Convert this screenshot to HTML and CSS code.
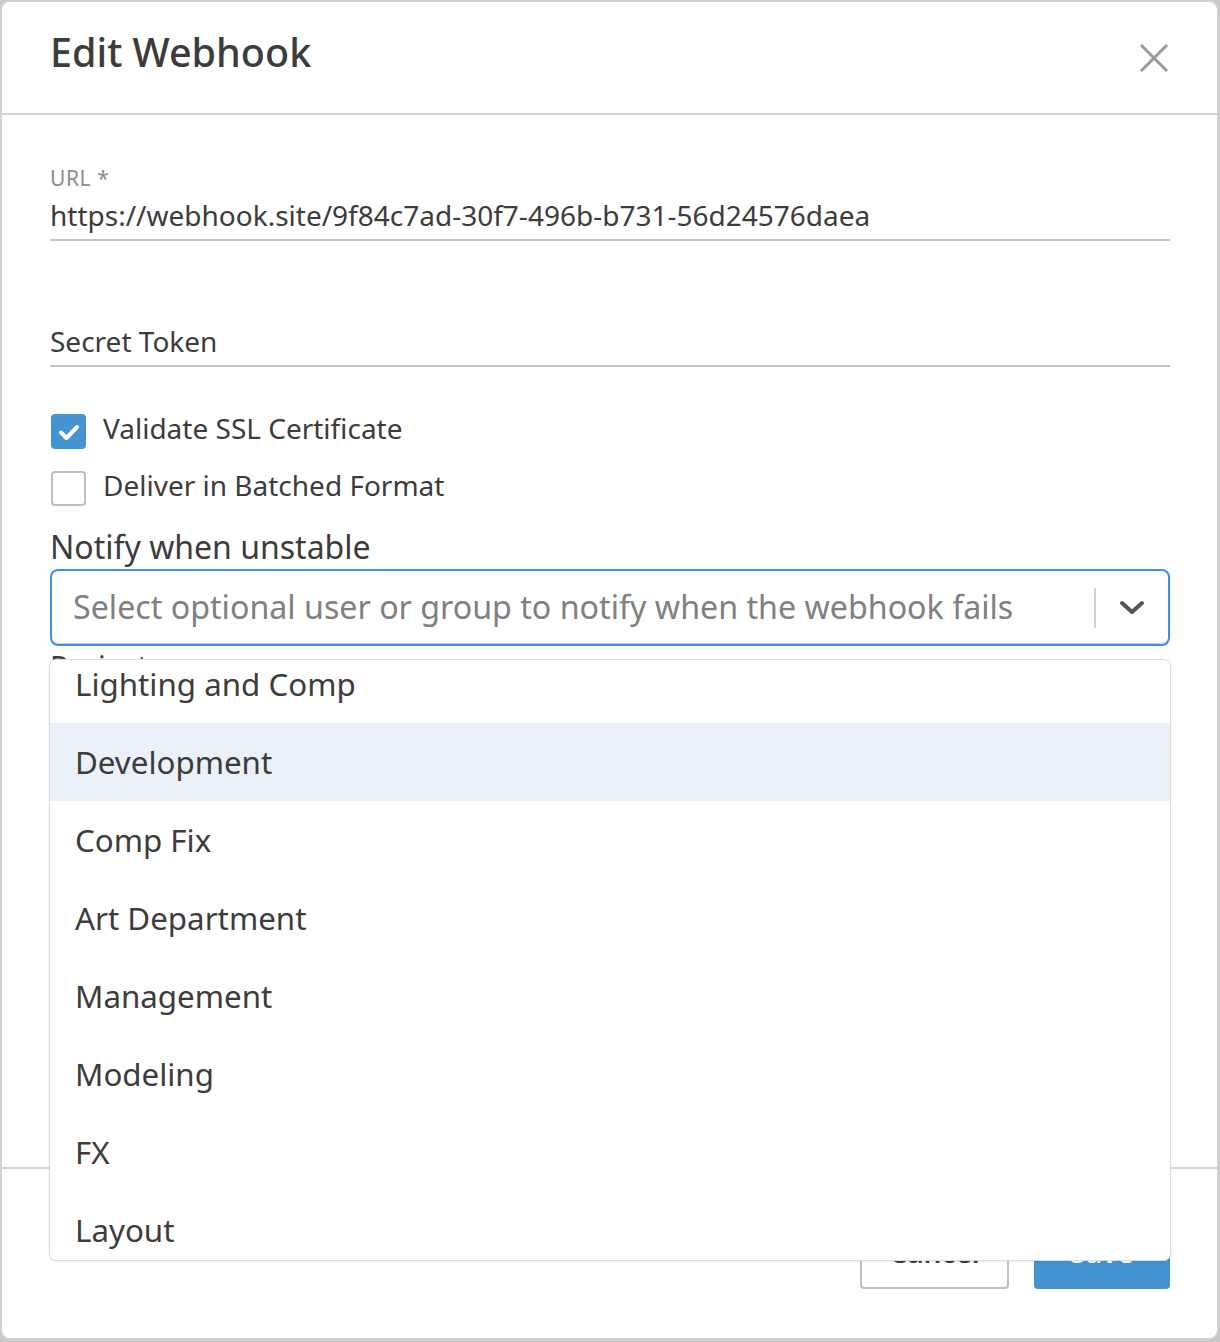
FILE: index.html
```html
<!DOCTYPE html>
<html lang="en">
<head>
<meta charset="utf-8">
<title>Edit Webhook</title>
<link rel="stylesheet" href="styles.css">
</head>
<body>
<div class="modal">
  <header class="modal-header">
    <h1 class="title">Edit Webhook</h1>
    <button class="close" type="button" aria-label="Close">
      <svg width="28" height="28" viewBox="0 0 28 28"><path d="M2 2 L26 26 M26 2 L2 26" stroke="#9a9a9a" stroke-width="3" stroke-linecap="square" fill="none"/></svg>
    </button>
  </header>
  <div class="modal-body">
    <div class="field">
      <div class="field-label">URL *</div>
      <div class="field-input">https://webhook.site/9f84c7ad-30f7-496b-b731-56d24576daea</div>
    </div>
    <div class="field">
      <div class="field-label"></div>
      <div class="field-input">Secret Token</div>
    </div>
    <div class="checks">
      <label class="check">
        <span class="box checked">
          <svg width="22" height="18" viewBox="0 0 22 18"><path d="M3 9.5 L8.5 15 L19 4" stroke="#fff" stroke-width="4" fill="none" stroke-linecap="round" stroke-linejoin="round"/></svg>
        </span>
        <span class="check-text">Validate SSL Certificate</span>
      </label>
      <label class="check">
        <span class="box"></span>
        <span class="check-text">Deliver in Batched Format</span>
      </label>
    </div>
    <div class="select-field">
      <div class="select-label">Notify when unstable</div>
      <div class="select">
        <span class="placeholder">Select optional user or group to notify when the webhook fails</span>
        <span class="sep"></span>
        <span class="chevron">
          <svg width="26" height="16" viewBox="0 0 26 16"><path d="M3 3 L13 12 L23 3" stroke="#555" stroke-width="4" fill="none" stroke-linecap="round" stroke-linejoin="round"/></svg>
        </span>
      </div>
      <div class="next-label">Project</div>
      <div class="menu">
        <ul class="menu-list">
          <li class="item">Lighting and Comp</li>
          <li class="item active">Development</li>
          <li class="item">Comp Fix</li>
          <li class="item">Art Department</li>
          <li class="item">Management</li>
          <li class="item">Modeling</li>
          <li class="item">FX</li>
          <li class="item">Layout</li>
        </ul>
      </div>
    </div>
  </div>
  <footer class="modal-footer">
    <button class="btn btn-cancel" type="button">Cancel</button>
    <button class="btn btn-save" type="button">Save</button>
  </footer>
</div>
</body>
</html>
```
FILE: styles.css
```css
* { box-sizing: border-box; }
html, body { margin: 0; padding: 0; }
body {
  width: 1220px;
  height: 1342px;
  background: #c9c9c9;
  font-family: "Noto Sans", "Open Sans", sans-serif;
  color: #3c3c3c;
  overflow: hidden;
}
.modal {
  width: 1219px;
  height: 1340px;
  background: #fff;
  border: 2px solid #d2d2d2;
  border-radius: 10px;
  display: flex;
  flex-direction: column;
  overflow: hidden;
}
.modal-header {
  height: 113px;
  flex: none;
  border-bottom: 2px solid #d2d2d2;
  display: flex;
  align-items: center;
  justify-content: space-between;
  padding: 0 49px 0 48px;
}
.title {
  margin: 0;
  font-size: 39.5px;
  font-weight: 500;
  line-height: 1;
  color: #3c3c3c;
  padding-bottom: 9px;
}
.close {
  border: 0;
  background: none;
  padding: 0;
  width: 28px;
  height: 28px;
  display: flex;
}
.modal-body {
  flex: 1;
  padding: 0 47px 0 48px;
}
.field { margin-top: 50px; }
.field-label {
  height: 26px;
  line-height: 26px;
  font-size: 21px;
  letter-spacing: 0.6px;
  color: #8c8c8c;
}
.field-input {
  height: 50px;
  line-height: 48px;
  font-size: 28px;
  color: #3c3c3c;
  border-bottom: 2px solid #c4c4c4;
}
.checks {
  margin-top: 47px;
  display: flex;
  flex-direction: column;
  gap: 22px;
}
.check {
  display: flex;
  align-items: center;
  height: 35px;
  gap: 17px;
}
.box {
  width: 35px;
  height: 35px;
  margin-left: 1px;
  border: 2px solid #bfbfbf;
  border-radius: 4px;
  background: #fff;
  display: flex;
  align-items: center;
  justify-content: center;
}
.box.checked {
  border-color: #4394d0;
  background: #4394d0;
}
.check-text {
  font-size: 28px;
  line-height: 35px;
  padding-bottom: 7px;
}
.select-field {
  position: relative;
  margin-top: 21px;
}
.select-label {
  font-size: 32px;
  line-height: 40px;
  padding-bottom: 3px;
  margin-bottom: -3px;
}
.select {
  margin-top: 2px;
  height: 77px;
  border: 2px solid #3f8fef;
  border-radius: 8px;
  display: flex;
  align-items: center;
  padding-left: 21px;
  box-shadow: inset 0 -1px 0 #cfcfcf;
}
.placeholder {
  flex: 1;
  font-size: 32.2px;
  color: #808080;
  white-space: nowrap;
  padding-bottom: 3px;
}
.sep {
  width: 2px;
  height: 40px;
  background: #d0d0d0;
}
.chevron {
  width: 72px;
  display: flex;
  justify-content: center;
  align-items: center;
}
.next-label {
  margin-top: 6px;
  font-size: 30px;
  line-height: 30px;
}
.menu {
  position: absolute;
  left: -1px;
  right: -1px;
  top: 132px;
  height: 602px;
  background: #fff;
  border: 1px solid #dcdcdc;
  border-radius: 7px;
  box-shadow: 0 1px 3px rgba(0,0,0,0.08);
  overflow: hidden;
}
.menu-list {
  list-style: none;
  margin: -15px 0 0 0;
  padding: 0;
}
.item {
  height: 78px;
  line-height: 78px;
  padding-left: 25px;
  font-size: 31.3px;
  color: #3c3c3c;
}
.item.active { background: #eaf1f8; }
.modal-footer {
  flex: none;
  height: 171px;
  border-top: 2px solid #d2d2d2;
  display: flex;
  justify-content: flex-end;
  align-items: flex-start;
  gap: 25px;
  padding: 50px 47px 0 0;
}
.btn {
  height: 70px;
  font-family: inherit;
  font-size: 28px;
  font-weight: 600;
  border-radius: 4px;
  padding: 0 0 5px 0;
}
.btn-cancel {
  width: 149px;
  background: #fff;
  border: 2px solid #c0c0c0;
  color: #3c3c3c;
}
.btn-save {
  width: 136px;
  background: #4394d0;
  border: 0;
  color: #fff;
}
```
